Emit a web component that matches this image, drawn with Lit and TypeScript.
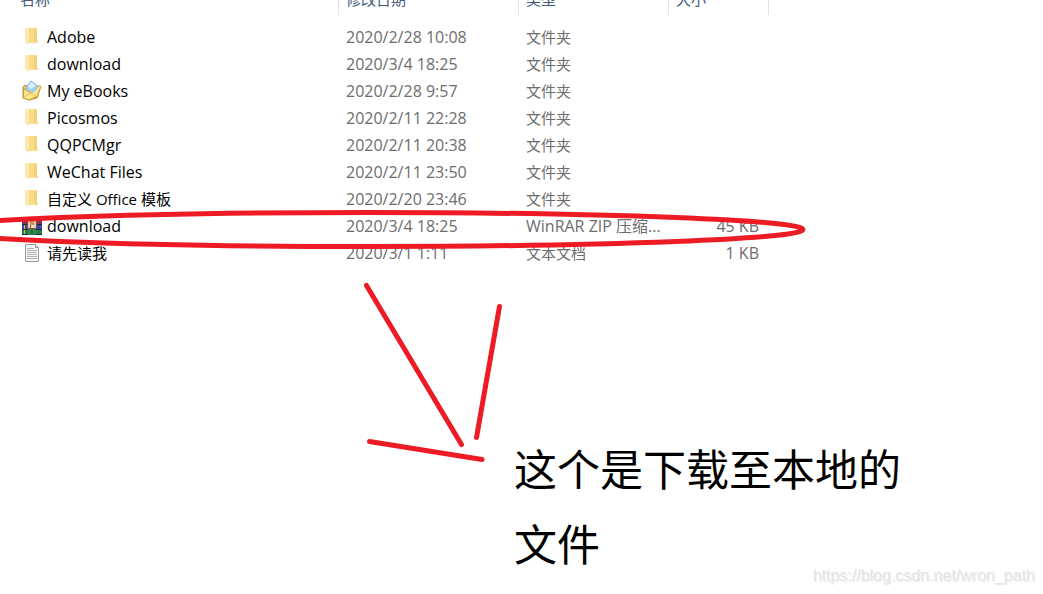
import { LitElement, html, svg, css } from "lit";
import { customElement } from "lit/decorators.js";

type Kind = "folder" | "books" | "zip" | "text";
interface Entry {
  kind: Kind;
  name: string;
  date: string;
  type: string;
  size: string;
}

const entries: Entry[] = [
  { kind: "folder", name: "Adobe", date: "2020/2/28 10:08", type: "文件夹", size: "" },
  { kind: "folder", name: "download", date: "2020/3/4 18:25", type: "文件夹", size: "" },
  { kind: "books", name: "My eBooks", date: "2020/2/28 9:57", type: "文件夹", size: "" },
  { kind: "folder", name: "Picosmos", date: "2020/2/11 22:28", type: "文件夹", size: "" },
  { kind: "folder", name: "QQPCMgr", date: "2020/2/11 20:38", type: "文件夹", size: "" },
  { kind: "folder", name: "WeChat Files", date: "2020/2/11 23:50", type: "文件夹", size: "" },
  { kind: "folder", name: "自定义 Office 模板", date: "2020/2/20 23:46", type: "文件夹", size: "" },
  { kind: "zip", name: "download", date: "2020/3/4 18:25", type: "WinRAR ZIP 压缩...", size: "45 KB" },
  { kind: "text", name: "请先读我", date: "2020/3/1 1:11", type: "文本文档", size: "1 KB" },
];

const icons = {
  folder: svg`
    <path d="M6 0h9v12l1 1v2H6z" fill="#f8dc8c"/>
    <path d="M12 1h3v12h-3z" fill="#f4d077"/>
    <path d="M3 0h2l2 2v13l-1 2-3-3z" fill="#fde9b0"/>`,
  books: svg`
    <path d="M1 5l2-2 4 2h9l2 2-3 9-8 2-6-2z" fill="#f0cb55" stroke="#b98d2b"/>
    <path d="M3.500 6L9 -1l7 5-1 9-7 2z" fill="#a9d2fa" stroke="#7eb4ea"/>
    <path d="M6 4l3.500-4L14 4l-4 4z" fill="#dceefe"/>
    <path d="M1.500 6.500L7 10l4 0 6-6.500 2 1-4 10-8 3.500-5.500-2z" fill="#fbe58d" stroke="#cda136"/>
    <path d="M8 9l5-5 3 2-5 5z" fill="#9ccbf8"/>
    <path d="M2 15l6-4 6 3" fill="none" stroke="#e4c256"/>`,
  zip: svg`
    <path d="M0 3h20v4H0z" fill="#8e3050"/>
    <path d="M0 7h20v5H0z" fill="#3d45a5"/>
    <path d="M0 12h20v6H0z" fill="#23814a"/>
    <path d="M0 7.500h20M0 12.500h20M0 17.500h20" stroke="#1c2838" fill="none"/>
    <path d="M2 8h1v4H2zM2 13h1v4H2z" fill="#e3b637"/>
    <path d="M6 3h8v15H6z" fill="#2f854d"/>
    <path d="M5 5h10v7H5z" fill="#84543c"/>
    <path d="M6 4h2v7H6zM12 4h2v7h-2z" fill="#c9d0d2"/>
    <path d="M8 4h4v4H8z" fill="#f08a3a"/>
    <path d="M9 8h3v3H9z" fill="#f4dfbd"/>
    <path d="M10 12v6" stroke="#175b35"/>`,
  text: svg`
    <path d="M3.500 .5h10l3 3v14h-13z" fill="#f7f7f7" stroke="#999"/>
    <path d="M13.500 .5v3h3" fill="#ddd" stroke="#999"/>
    <path d="M5 4.500h7M5 6.500h10M5 8.500h10M5 10.500h10M5 12.500h10M5 14.500h10" stroke="#b0b0b0" fill="none"/>`,
};

const wide = /^[\u4e00-\u9fff]/;
const script = (text: string) => (wide.test(text) ? "han" : "");

@customElement("app-root")
export class AppRoot extends LitElement {
  static styles = css`
    :host {
      display: block;
      position: relative;
      min-height: 100vh;
      box-sizing: border-box;
      overflow: hidden;
      background: #fff;
      color: #000;
      font-family: "Open Sans", "Noto Sans CJK SC", sans-serif;
      font-size: 16px;
    }
    .files {
      width: 769px;
      margin-top: -14px;
      table-layout: fixed;
      border-collapse: separate;
      border-spacing: 0;
    }
    .name { width: 339px; }
    .date { width: 180px; }
    .type { width: 150px; }
    .size { width: 100px; }
    th {
      height: 29px;
      padding: 0 7px;
      border-right: 1px solid #e2e2e2;
      box-sizing: border-box;
      color: #43597a;
      font-size: 15px;
      font-weight: 400;
      line-height: 26px;
      text-align: left;
      vertical-align: top;
    }
    th:first-child { padding-left: 20px; }
    .gap td { height: 9px; }
    td {
      height: 27px;
      padding: 0 7px;
      color: #6d6d6d;
      line-height: 27px;
      white-space: nowrap;
    }
    td.han, .han { font-size: 15px; }
    .entry {
      display: flex;
      align-items: center;
      gap: 5px;
      padding-left: 15px;
      color: #000;
    }
    .icon { width: 20px; height: 20px; flex: none; overflow: visible; }
    td.amount { text-align: right; padding-right: 10px; }
    .note {
      width: 400px;
      margin: 163px 0 0 514px;
      font-size: 43px;
      line-height: 75px;
      font-family: "Noto Sans CJK SC", sans-serif;
    }
    .marks {
      position: absolute;
      top: 0;
      left: 0;
      width: 1043px;
      height: 594px;
      pointer-events: none;
    }
    .credit {
      position: absolute;
      right: 8px;
      bottom: 8px;
      color: #e6e6e6;
      text-shadow: 1px 1px 0 #ececec;
      font: 16px/20px "Liberation Sans", sans-serif;
    }
  `;

  render() {
    return html`
      <table class="files">
        <thead>
          <tr>
            <th class="name">名称</th>
            <th class="date">修改日期</th>
            <th class="type">类型</th>
            <th class="size">大小</th>
          </tr>
        </thead>
        <tbody>
          <tr class="gap"><td colspan="4"></td></tr>
          ${entries.map(
            (e) => html`<tr>
              <td>
                <div class="entry">
                  <svg class="icon" viewBox="0 0 20 20" aria-hidden="true">${icons[e.kind]}</svg>
                  <span class=${script(e.name)}>${e.name}</span>
                </div>
              </td>
              <td>${e.date}</td>
              <td class=${script(e.type)}>${e.type}</td>
              <td class="amount">${e.size}</td>
            </tr>`
          )}
        </tbody>
      </table>
      <div class="note">这个是下载至本地的文件</div>
      <svg class="marks" viewBox="0 0 1043 594" fill="none" stroke="#ed1c24" stroke-width="5" stroke-linecap="round" aria-hidden="true">
        <ellipse cx="368" cy="229.500" rx="435" ry="17" />
        <path d="M366.500 285.500L461.500 444.500M499.500 306.500L476.500 437.500M369.500 441.500L482 459.500" />
      </svg>
      <span class="credit">https://blog.csdn.net/wron_path</span>
    `;
  }
}
